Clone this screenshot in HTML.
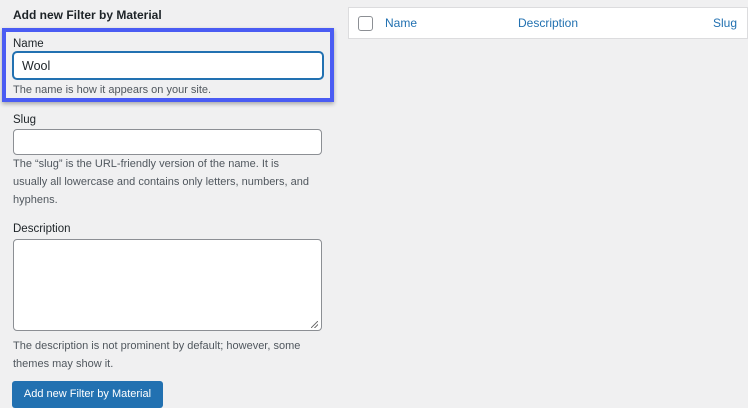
<!DOCTYPE html>
<html><head><style>
*{box-sizing:border-box;margin:0;padding:0}
body{width:748px;height:408px;background:#f0f0f1;font-family:"Liberation Sans",sans-serif;color:#3c434a;position:relative;overflow:hidden;font-size:11px}
.a{position:absolute;white-space:nowrap}
.lbl{font-size:11.5px;color:#1d2327}
.help{font-size:11px;color:#50575e;line-height:18px}
.in{position:absolute;background:#fff;border:1px solid #8c8f94;border-radius:4px}
</style></head><body>
<div class="a" style="left:13px;top:8px;font-size:12px;font-weight:bold;color:#1d2327">Add new Filter by Material</div>
<div class="a" style="left:2px;top:28px;width:332px;height:74px;border:4px solid #4a5cf3;box-shadow:0 2px 4px rgba(0,0,0,.3)"></div>
<div class="a lbl" style="left:13px;top:38px">Name</div>
<div class="in" style="left:13px;top:52px;width:310px;height:27px;border:1.5px solid #2271b1;box-shadow:0 0 0 1px #2271b1"></div>
<div class="a" style="left:22px;top:59px;font-size:12.5px;color:#1d2327">Wool</div>
<div class="a help" style="left:13px;top:81px">The name is how it appears on your site.</div>
<div class="a lbl" style="left:13px;top:114px">Slug</div>
<div class="in" style="left:13px;top:129px;width:309px;height:26px"></div>
<div class="a help" style="left:13px;top:155px">The “slug” is the URL-friendly version of the name. It is<br>usually all lowercase and contains only letters, numbers, and<br>hyphens.</div>
<div class="a lbl" style="left:13px;top:223px">Description</div>
<div class="in" style="left:13px;top:239px;width:309px;height:92px"></div>
<div class="a" style="left:311px;top:321px;width:7px;height:7px;background:linear-gradient(135deg,transparent 45%,#777 45%,#777 55%,transparent 55%,transparent 70%,#777 70%,#777 80%,transparent 80%)"></div>
<div class="a help" style="left:13px;top:337px">The description is not prominent by default; however, some<br>themes may show it.</div>
<div class="a" style="left:12px;top:381px;width:151px;height:27px;background:#2271b1;border-radius:3px;color:#fff;font-size:11px;line-height:27px;text-align:center">Add new Filter by Material</div>
<div class="a" style="left:348px;top:7px;width:400px;height:32px;background:#fff;border:1px solid #dcdcde"></div>
<div class="a" style="left:358px;top:16px;width:15px;height:15px;border:1px solid #8c8f94;border-radius:3px;background:#fff"></div>
<div class="a" style="left:385px;top:16px;font-size:12px;color:#2271b1">Name</div>
<div class="a" style="left:518px;top:16px;font-size:12px;color:#2271b1">Description</div>
<div class="a" style="left:713px;top:16px;font-size:12px;color:#2271b1">Slug</div>
</body></html>
